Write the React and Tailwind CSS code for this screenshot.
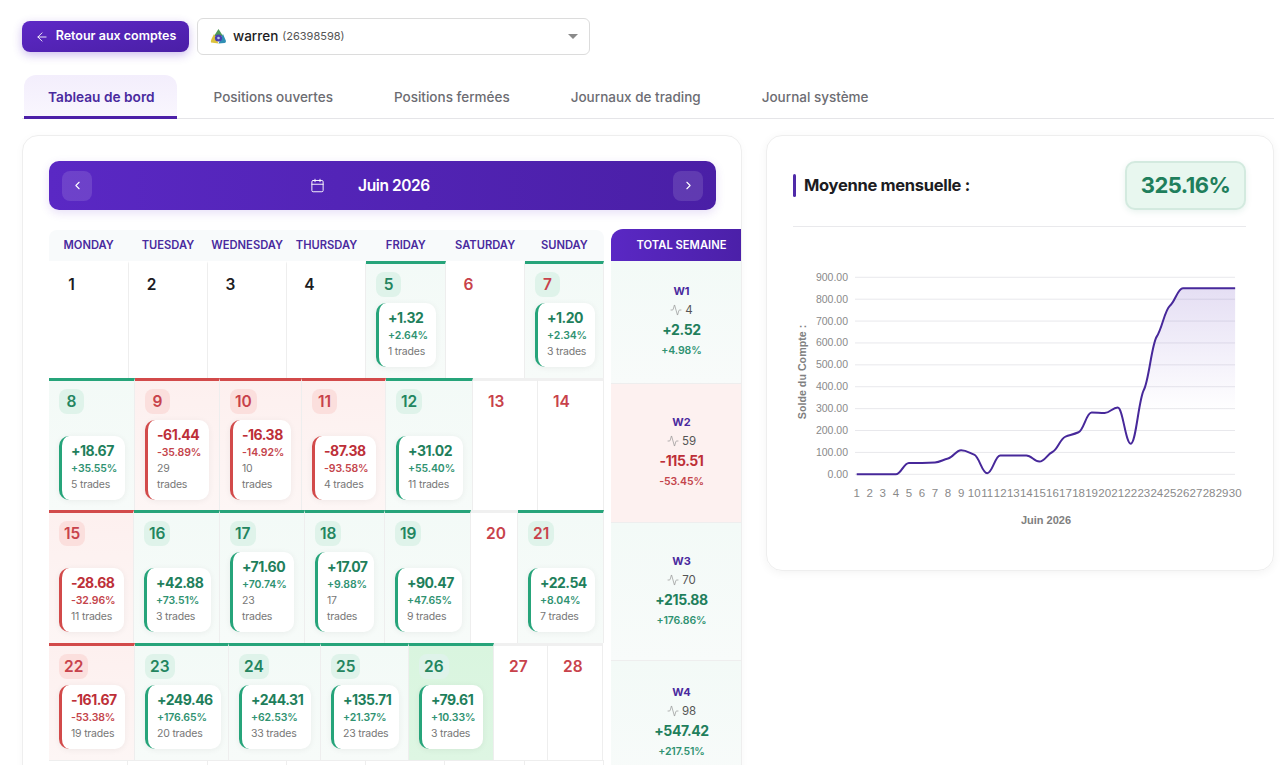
import React from 'react'
import { ArrowLeft, Calendar, ChevronLeft, ChevronRight, Activity } from 'lucide-react'

const TABS = ['Tableau de bord', 'Positions ouvertes', 'Positions fermées', 'Journaux de trading', 'Journal système']
const DAYS = ['MONDAY', 'TUESDAY', 'WEDNESDAY', 'THURSDAY', 'FRIDAY', 'SATURDAY', 'SUNDAY']

// one calendar row per week: w = cell width, v/p/t = profit, percent, trades
const WEEKS = [
  [
    { d: 1, w: 'w-[80px]' }, { d: 2, w: 'w-[79px]' }, { d: 3, w: 'w-[79px]' }, { d: 4, w: 'w-[79px]' },
    { d: 5, w: 'w-[80px]', v: '+1.32', p: '+2.64%', t: '1 trades' },
    { d: 6, w: 'w-[79px]', sun: true },
    { d: 7, w: 'w-[79px]', sun: true, v: '+1.20', p: '+2.34%', t: '3 trades' },
  ],
  [
    { d: 8, w: 'w-[86px]', v: '+18.67', p: '+35.55%', t: '5 trades' },
    { d: 9, w: 'w-[85px]', v: '-61.44', p: '-35.89%', t: '29 trades', stack: true },
    { d: 10, w: 'w-[82px]', v: '-16.38', p: '-14.92%', t: '10 trades', stack: true },
    { d: 11, w: 'w-[84px]', v: '-87.38', p: '-93.58%', t: '4 trades' },
    { d: 12, w: 'w-[87px]', v: '+31.02', p: '+55.40%', t: '11 trades' },
    { d: 13, w: 'w-[65px]', sun: true },
    { d: 14, w: 'w-[66px]', sun: true },
  ],
  [
    { d: 15, w: 'w-[85px]', v: '-28.68', p: '-32.96%', t: '11 trades' },
    { d: 16, w: 'w-[86px]', v: '+42.88', p: '+73.51%', t: '3 trades' },
    { d: 17, w: 'w-[85px]', v: '+71.60', p: '+70.74%', t: '23 trades', stack: true },
    { d: 18, w: 'w-[80px]', v: '+17.07', p: '+9.88%', t: '17 trades', stack: true },
    { d: 19, w: 'w-[86px]', v: '+90.47', p: '+47.65%', t: '9 trades' },
    { d: 20, w: 'w-[47px]', sun: true },
    { d: 21, w: 'w-[86px]', sun: true, v: '+22.54', p: '+8.04%', t: '7 trades' },
  ],
  [
    { d: 22, w: 'w-[86px]', v: '-161.67', p: '-53.38%', t: '19 trades' },
    { d: 23, w: 'w-[94px]', v: '+249.46', p: '+176.65%', t: '20 trades' },
    { d: 24, w: 'w-[92px]', v: '+244.31', p: '+62.53%', t: '33 trades' },
    { d: 25, w: 'w-[88px]', v: '+135.71', p: '+21.37%', t: '23 trades' },
    { d: 26, w: 'w-[85px]', today: true, v: '+79.61', p: '+10.33%', t: '3 trades' },
    { d: 27, w: 'w-[54px]', sun: true },
    { d: 28, w: 'w-[55px]', sun: true },
  ],
]

const TOTALS = [
  { h: 'h-[123px]', l: 'W1', n: 4, v: '+2.52', p: '+4.98%' },
  { h: 'h-[139px]', l: 'W2', n: 59, v: '-115.51', p: '-53.45%' },
  { h: 'h-[138px]', l: 'W3', n: 70, v: '+215.88', p: '+176.86%' },
  { h: 'h-[124px]', l: 'W4', n: 98, v: '+547.42', p: '+217.51%' },
]

const BALANCE = [0, 0, 0, 0, 52, 52, 54, 72, 110, 90, 5, 86, 86, 86, 58, 102, 172, 192, 282, 280, 305, 140, 385, 630, 770, 850, 850, 850, 850, 850]
const chartX = (i) => 856.7 + i * 13.05
const chartY = (v) => 474.3 - v * 0.2189

// shallow tangents give the shoulder the reference curve has at every point
function linePath(points) {
  const slope = points.map((cur, i) => {
    const prev = points[i - 1] || cur
    const next = points[i + 1] || cur
    if ((cur[1] - prev[1]) * (next[1] - cur[1]) <= 0) return 0
    return (next[1] - prev[1]) * 0.09
  })
  let d = `M${points[0][0]} ${points[0][1]}`
  for (let i = 1; i < points.length; i++) {
    const a = points[i - 1]
    const b = points[i]
    d += ` C${a[0] + 5.2} ${a[1] + slope[i - 1]} ${b[0] - 5.2} ${b[1] - slope[i]} ${b[0]} ${b[1]}`
  }
  return d
}

function BalanceChart() {
  const points = BALANCE.map((v, i) => [chartX(i), chartY(v)])
  const line = linePath(points)
  const ticks = [900, 800, 700, 600, 500, 400, 300, 200, 100, 0]
  return (
    <svg width="453" height="270" viewBox="793 262 453 270" className="block overflow-visible" style={{ fontFamily: '"Liberation Sans", Arial, sans-serif' }}>
      <defs>
        <linearGradient id="balanceFill" gradientUnits="userSpaceOnUse" x1="0" y1="288" x2="0" y2="412">
          <stop offset="0" stopColor="#5b34b8" stopOpacity="0.16" />
          <stop offset="1" stopColor="#5b34b8" stopOpacity="0" />
        </linearGradient>
      </defs>
      {ticks.map((t) => (
        <g key={t}>
          <line x1="855" x2="1235" y1={chartY(t)} y2={chartY(t)} stroke="#e8e8ec" strokeWidth="1" />
          <text x="848" y={chartY(t) + 3.5} textAnchor="end" fontSize="10.5" fill="#8a8a8a">{t.toFixed(2)}</text>
        </g>
      ))}
      <path d={`${line} L1235 474.3 L856.7 474.3 Z`} fill="url(#balanceFill)" />
      <path d={line} fill="none" stroke="#47289a" strokeWidth="2" />
      {BALANCE.map((_, i) => (
        <text key={i} x={chartX(i)} y="497" textAnchor="middle" fontSize="11.5" fill="#8a8a8a">{i + 1}</text>
      ))}
      <text x="1046" y="524" textAnchor="middle" fontSize="11" fontWeight="700" fill="#808080">Juin 2026</text>
      <text transform="translate(805.5 372) rotate(-90)" textAnchor="middle" fontSize="10.7" fontWeight="700" fill="#808080">Solde du Compte :</text>
    </svg>
  )
}

function MtLogo() {
  return (
    <svg width="17" height="17" viewBox="0 0 17 17">
      <path d="M8.5 1 L13 8 L4 8 Z" fill="#4f9a5a" />
      <path d="M4 6 L8.5 15.5 L1 14.5 Q0.5 13 1.5 11 Z" fill="#dcc23c" />
      <path d="M13 6 L16 13 Q16 15 14.5 15 L8.5 15.5 Z" fill="#2f8fb4" />
      <circle cx="8.5" cy="10" r="3.6" fill="#4a3fb0" />
      <circle cx="8.5" cy="10" r="1.3" fill="#b9c4ea" />
    </svg>
  )
}

function DayCell({ cell, row }) {
  const traded = !!cell.v
  const loss = traded && cell.v[0] === '-'
  let bg = 'bg-white'
  if (traded) bg = loss ? 'bg-gradient-to-b from-[#fdf0ef] to-[#fdf6f5]' : 'bg-gradient-to-b from-[#f3faf7] to-[#f7fbf9]'
  if (cell.today) bg = 'bg-gradient-to-b from-[#d9f5df] to-[#def6e3]'
  let top = loss ? 'border-t-[#d24a4a]' : 'border-t-[#26a47a]'
  if (!traded) top = row === 0 ? 'border-t-white' : 'border-t-[#f0f0f0]'
  const dateColor = cell.sun || loss ? 'text-[#c8424b]' : traded ? 'text-[#23855f]' : 'text-[#1c1c22]'
  const badge = !traded ? '' : loss ? 'bg-[#fbdfdd]' : 'bg-[#dff3ea]'
  return (
    <div className={`${cell.w} ${bg} ${top} ${row === 1 ? 'pb-[10px]' : 'pb-[11px]'} flex flex-col shrink-0 border-t-[3px] border-r border-r-[#eeeeee] px-[10px] pt-2`}>
      <div className={`${badge} ${dateColor} mb-[6px] self-start h-[25px] min-w-[25px] px-[5px] rounded-[8px] flex items-center justify-center text-[15.5px] font-semibold`}>
        {cell.d}
      </div>
      {traded && (
        <div className={`mt-auto ${cell.stack ? 'w-full' : 'w-fit'} rounded-[10px] border-l-[3px] bg-white pl-[9px] pr-[8px] pt-[5px] pb-[7px] shadow-[0_1px_6px_rgba(0,0,0,0.06)] ${loss ? 'border-l-[#d24a4a]' : 'border-l-[#26a47a]'}`}>
          <div className={`text-[14px] leading-[20px] font-bold tracking-[-0.5px] whitespace-nowrap ${loss ? 'text-[#bd2f38]' : 'text-[#1f7f5c]'}`}>{cell.v}</div>
          <div className={`text-[10.5px] leading-[16px] font-semibold tracking-[-0.1px] whitespace-nowrap ${loss ? 'text-[#c4444b]' : 'text-[#2f9271]'}`}>{cell.p}</div>
          <div className={`text-[10.5px] leading-[16px] tracking-[-0.2px] text-[#777777] ${cell.stack ? 'w-min' : 'whitespace-nowrap'}`}>{cell.t}</div>
        </div>
      )}
    </div>
  )
}

function WeekTotal({ week }) {
  const loss = week.v[0] === '-'
  return (
    <div className={`${week.h} ${loss ? 'bg-[#fdf1f0]' : 'bg-gradient-to-b from-[#f3faf7] to-[#f8fbfa]'} flex flex-col items-center justify-center border-b border-[#eeeeee]`}>
      <div className="text-[11px] leading-[18px] font-bold text-[#4a2a9e]">{week.l}</div>
      <div className="flex items-center gap-[3px] text-[11.5px] leading-[20px] text-[#555555]">
        <Activity size={12} strokeWidth={1.25} className="text-[#888888]" />
        {week.n}
      </div>
      <div className={`text-[14px] leading-[20px] font-bold tracking-[-0.4px] ${loss ? 'text-[#bd2f38]' : 'text-[#1f7f5c]'}`}>{week.v}</div>
      <div className={`text-[10.5px] leading-[22px] font-semibold tracking-[-0.1px] ${loss ? 'text-[#c4444b]' : 'text-[#2f9271]'}`}>{week.p}</div>
    </div>
  )
}

export default function App() {
  return (
    <div className="h-[765px] overflow-hidden bg-white px-[22px] pt-[18px] text-[#1c1c22]" style={{ fontFamily: 'Inter, "Noto Sans", sans-serif' }}>
      {/* Account toolbar */}
      <div className="flex items-center gap-2">
        <button className="flex h-[31px] w-[167px] items-center justify-center gap-[7px] rounded-[8px] bg-gradient-to-br from-[#5d28c6] to-[#4a1fa6] text-[12.5px] font-semibold text-white shadow-[0_3px_10px_rgba(91,40,198,0.3)]">
          <ArrowLeft size={14} strokeWidth={1.5} />
          Retour aux comptes
        </button>
        <div className="flex h-[37px] w-[393px] items-center rounded-[6px] border border-[#dcdcdc] pl-[12px] pr-[11px]">
          <MtLogo />
          <span className="ml-[6px] text-[13.5px] font-medium">warren</span>
          <span className="ml-[4px] text-[11px] text-[#555555]">(26398598)</span>
          <span className="ml-auto h-0 w-0 border-x-[5px] border-t-[5px] border-x-transparent border-t-[#8a8a8a]" />
        </div>
      </div>

      {/* Tabs */}
      <div className="mt-5 flex h-[44px] w-[1252px] gap-[13px] border-b border-[#e5e5e8]">
        {TABS.map((tab, i) => (
          <div
            key={tab}
            className={`flex h-[44px] items-center rounded-t-[12px] border-b-[3px] pt-[3px] px-6 ${i === 0 ? 'ml-[2px] border-[#4c1fa8] bg-gradient-to-b from-[#f3eefc] to-[#f9f6fe] pr-[22px] text-[13.7px] font-semibold text-[#4a2a9e]' : 'border-transparent text-[13.5px] font-medium text-[#6c6c72]'}`}
          >
            {tab}
          </div>
        ))}
      </div>

      <div className="mt-4 flex items-start gap-6">
        {/* Calendar card */}
        <div className="h-[700px] w-[720px] shrink-0 overflow-hidden rounded-t-[16px] border border-[#eeeeee] pl-[26px] pt-[25px] shadow-[0_2px_10px_rgba(0,0,0,0.03)]">
          <div className="flex h-[49px] w-[667px] items-center justify-between rounded-[10px] bg-gradient-to-r from-[#5a28c4] to-[#4a1fa6] px-[13px] shadow-[0_3px_10px_rgba(91,40,198,0.15)]">
            <div className="flex h-[30px] w-[30px] items-center justify-center rounded-[8px] bg-white/12 text-white">
              <ChevronLeft size={13} />
            </div>
            <div className="mr-[25px] flex items-center gap-[33px] text-white">
              <Calendar size={15} strokeWidth={1.5} />
              <span className="text-[15.5px] font-semibold tracking-[-0.4px]">Juin 2026</span>
            </div>
            <div className="flex h-[30px] w-[30px] items-center justify-center rounded-[8px] bg-white/12 text-white">
              <ChevronRight size={13} />
            </div>
          </div>

          <div className="mt-[19px] flex w-[710px]">
            <div className="mt-px w-[555px] shrink-0">
              <div className="grid h-[31px] grid-cols-7 items-center rounded-t-[8px] bg-[#f8fafb] text-center text-[11.2px] font-semibold text-[#4a2a9e]">
                {DAYS.map((day) => <div key={day} className="whitespace-nowrap">{day}</div>)}
              </div>
              {WEEKS.map((week, row) => (
                <div key={week[0].d} className="flex">
                  {week.map((cell) => <DayCell key={cell.d} cell={cell} row={row} />)}
                </div>
              ))}
              <div className="grid h-[40px] grid-cols-7 border-t border-[#eeeeee]">
                {DAYS.map((day) => <div key={day} className="border-r border-[#eeeeee]" />)}
              </div>
            </div>

            <div className="ml-[7px] w-[141px] shrink-0">
              <div className="flex h-[32px] items-center justify-center rounded-tl-[12px] bg-gradient-to-r from-[#5a28c4] to-[#4a1fa6] text-[11.2px] font-semibold text-white">
                TOTAL SEMAINE
              </div>
              {TOTALS.map((week) => <WeekTotal key={week.l} week={week} />)}
            </div>
          </div>
        </div>

        {/* Monthly average card */}
        <div className="h-[436px] w-[508px] shrink-0 rounded-[16px] border border-[#eeeeee] pl-[26px] pr-[27px] pt-[25px] shadow-[0_2px_10px_rgba(0,0,0,0.05)]">
          <div className="flex items-center justify-between border-b border-[#e9e9ec] pb-4">
            <div className="flex items-center gap-2">
              <span className="h-[23px] w-[3px] rounded-sm bg-[#4f2aa8]" />
              <span className="text-[16.5px] font-bold tracking-[-0.3px]">Moyenne mensuelle :</span>
            </div>
            <div className="flex h-[49px] w-[121px] items-center justify-center rounded-[10px] border-2 border-[#d3eadf] bg-[#e8f7ef] text-[22px] font-bold tracking-[-0.5px] text-[#1f7f5c] shadow-[0_2px_6px_rgba(31,127,92,0.1)]">
              325.16%
            </div>
          </div>
          <div className="mt-[35px]">
            <BalanceChart />
          </div>
        </div>
      </div>
    </div>
  )
}
